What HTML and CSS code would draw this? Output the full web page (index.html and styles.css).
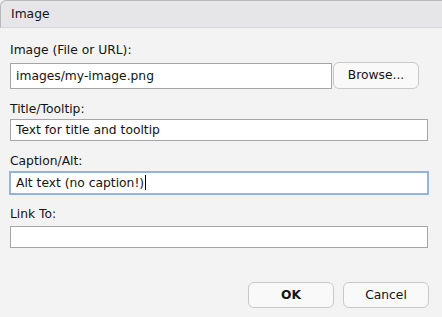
FILE: index.html
```html
<!DOCTYPE html>
<html lang="en">

<head>
  <meta charset="UTF-8">
  <meta name="viewport" content="width=device-width, initial-scale=1.0">
  <title>Image</title>
  <link rel="stylesheet" href="styles.css">
</head>

<body>
  <div class="dialog">
    <div class="titlebar">Image</div>
    <div class="form">
      <div class="field first">
        <div class="label">Image (File or URL):</div>
        <div class="row">
          <div class="input tall">images/my-image.png</div>
          <div class="btn browse">Browse...</div>
        </div>
      </div>
      <div class="field">
        <div class="label">Title/Tooltip:</div>
        <div class="input">Text for title and tooltip</div>
      </div>
      <div class="field">
        <div class="label">Caption/Alt:</div>
        <div class="input focus">Alt text (no caption!)<span class="caret"></span></div>
      </div>
      <div class="field last">
        <div class="label">Link To:</div>
        <div class="input"></div>
      </div>
    </div>
    <div class="footer">
      <div class="btn ok">OK</div>
      <div class="btn">Cancel</div>
    </div>
  </div>
</body>

</html>
```

FILE: styles.css
```css
* {
  padding: 0;
  margin: 0;
  box-sizing: border-box;
}

body {
  background-color: #f3f3f3;
  font-family: "DejaVu Sans", sans-serif;
  font-size: 12.3px;
  color: #141414;
  width: 442px;
  height: 317px;
  overflow: hidden;
}

.titlebar {
  height: 28px;
  line-height: 26px;
  padding-left: 10px;
  background-color: #e6e6e8;
  border-top: 1px solid #b9b9bb;
  border-left: 1px solid #b9b9bb;
  border-bottom: 1px solid #d6d6d8;
  border-top-left-radius: 6px;
}

.form {
  padding: 14px 14px 0 10px;
}

.field {
  margin-top: 12px;
}

.field.first {
  margin-top: 0;
}

.label {
  line-height: 16px;
  margin-bottom: 3px;
}

.first .label {
  margin-bottom: 5px;
}

.first + .field .label {
  margin-bottom: 2px;
}

.last .label {
  margin-bottom: 4px;
}

.row {
  display: flex;
  align-items: center;
  padding-right: 9px;
}

.input {
  height: 22px;
  line-height: 20px;
  padding-left: 5px;
  background-color: #fff;
  border: 1px solid #a5a5a5;
  white-space: nowrap;
}

.input.tall {
  flex: 1;
  height: 26px;
  line-height: 24px;
}

.input.focus {
  border-color: #93b3e0;
  outline: 1px solid #93b3e0;
}

.caret {
  display: inline-block;
  width: 1px;
  height: 15px;
  margin-left: 1px;
  vertical-align: -3px;
  background-color: #000;
}

.btn {
  width: 86px;
  height: 26px;
  line-height: 24px;
  text-align: center;
  background-color: #f9f9f9;
  border: 1px solid #c8c8c8;
  border-radius: 6px;
}

.browse {
  height: 27px;
  margin-left: 1px;
  margin-top: -1px;
}

.footer {
  display: flex;
  justify-content: flex-end;
  gap: 9px;
  padding-right: 13px;
  margin-top: 34px;
}

.ok {
  font-weight: bold;
}
```
